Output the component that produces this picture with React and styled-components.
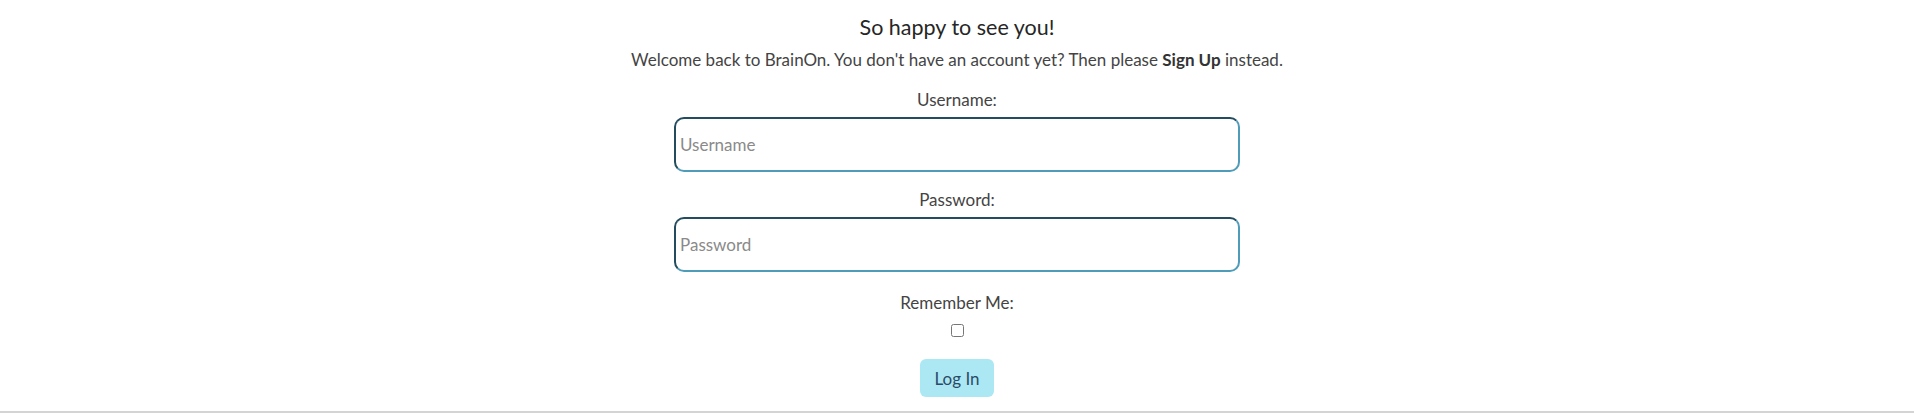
import React from 'react';
import styled, { createGlobalStyle } from 'styled-components';

const GlobalStyle = createGlobalStyle`
  body {
    margin: 0;
    background: #ffffff;
    font-family: "Lato", "Noto Sans", sans-serif;
    color: #333333;
  }
`;

const Page = styled.main`
  height: 411px;
  border-bottom: 2px solid #d4d4d4;
  display: flex;
  flex-direction: column;
  align-items: center;
  text-align: center;
`;

const Title = styled.h1`
  margin: 15px 0 0;
  font-size: 21.5px;
  line-height: 24px;
  font-weight: 400;
  color: #262626;
`;

const Intro = styled.p`
  margin: 10px 0 0;
  font-size: 17px;
  line-height: 22px;
  color: #444444;

  & strong {
    font-weight: 700;
    color: #333333;
  }
`;

const Form = styled.form`
  display: flex;
  flex-direction: column;
  align-items: center;
  margin-top: 18px;
`;

const Label = styled.label`
  font-size: 17px;
  line-height: 22px;
  color: #444444;
  margin-top: ${p => p.$gap || 0}px;
`;

const Input = styled.input`
  box-sizing: border-box;
  width: 566px;
  height: 55px;
  margin-top: 6px;
  padding: 0 4px;
  border: 2px solid;
  border-color: #234c5e #4e9bba #4e9bba #234c5e;
  border-radius: 10px;
  font-family: inherit;
  font-size: 17px;
  color: #333333;
  outline: none;

  &::placeholder {
    color: #8a8a8a;
  }
`;

const Check = styled.input`
  width: 13px;
  height: 13px;
  margin: 10px 0 0;
`;

const Button = styled.button`
  margin-top: 22px;
  width: 74px;
  height: 38px;
  border: none;
  border-radius: 6px;
  background: #ace7f4;
  font-family: inherit;
  font-size: 17px;
  color: #2b4c66;
  cursor: pointer;
`;

export default function App() {
  return (
    <>
      <GlobalStyle />
      <Page>
        <Title>So happy to see you!</Title>
        <Intro>
          Welcome back to BrainOn. You don't have an account yet? Then please <strong>Sign Up</strong> instead.
        </Intro>
        <Form onSubmit={e => e.preventDefault()}>
          <Label htmlFor="username">Username:</Label>
          <Input id="username" placeholder="Username" />
          <Label htmlFor="password" $gap={17}>Password:</Label>
          <Input id="password" type="password" placeholder="Password" />
          <Label htmlFor="remember" $gap={20}>Remember Me:</Label>
          <Check id="remember" type="checkbox" />
          <Button type="submit">Log In</Button>
        </Form>
      </Page>
    </>
  );
}
